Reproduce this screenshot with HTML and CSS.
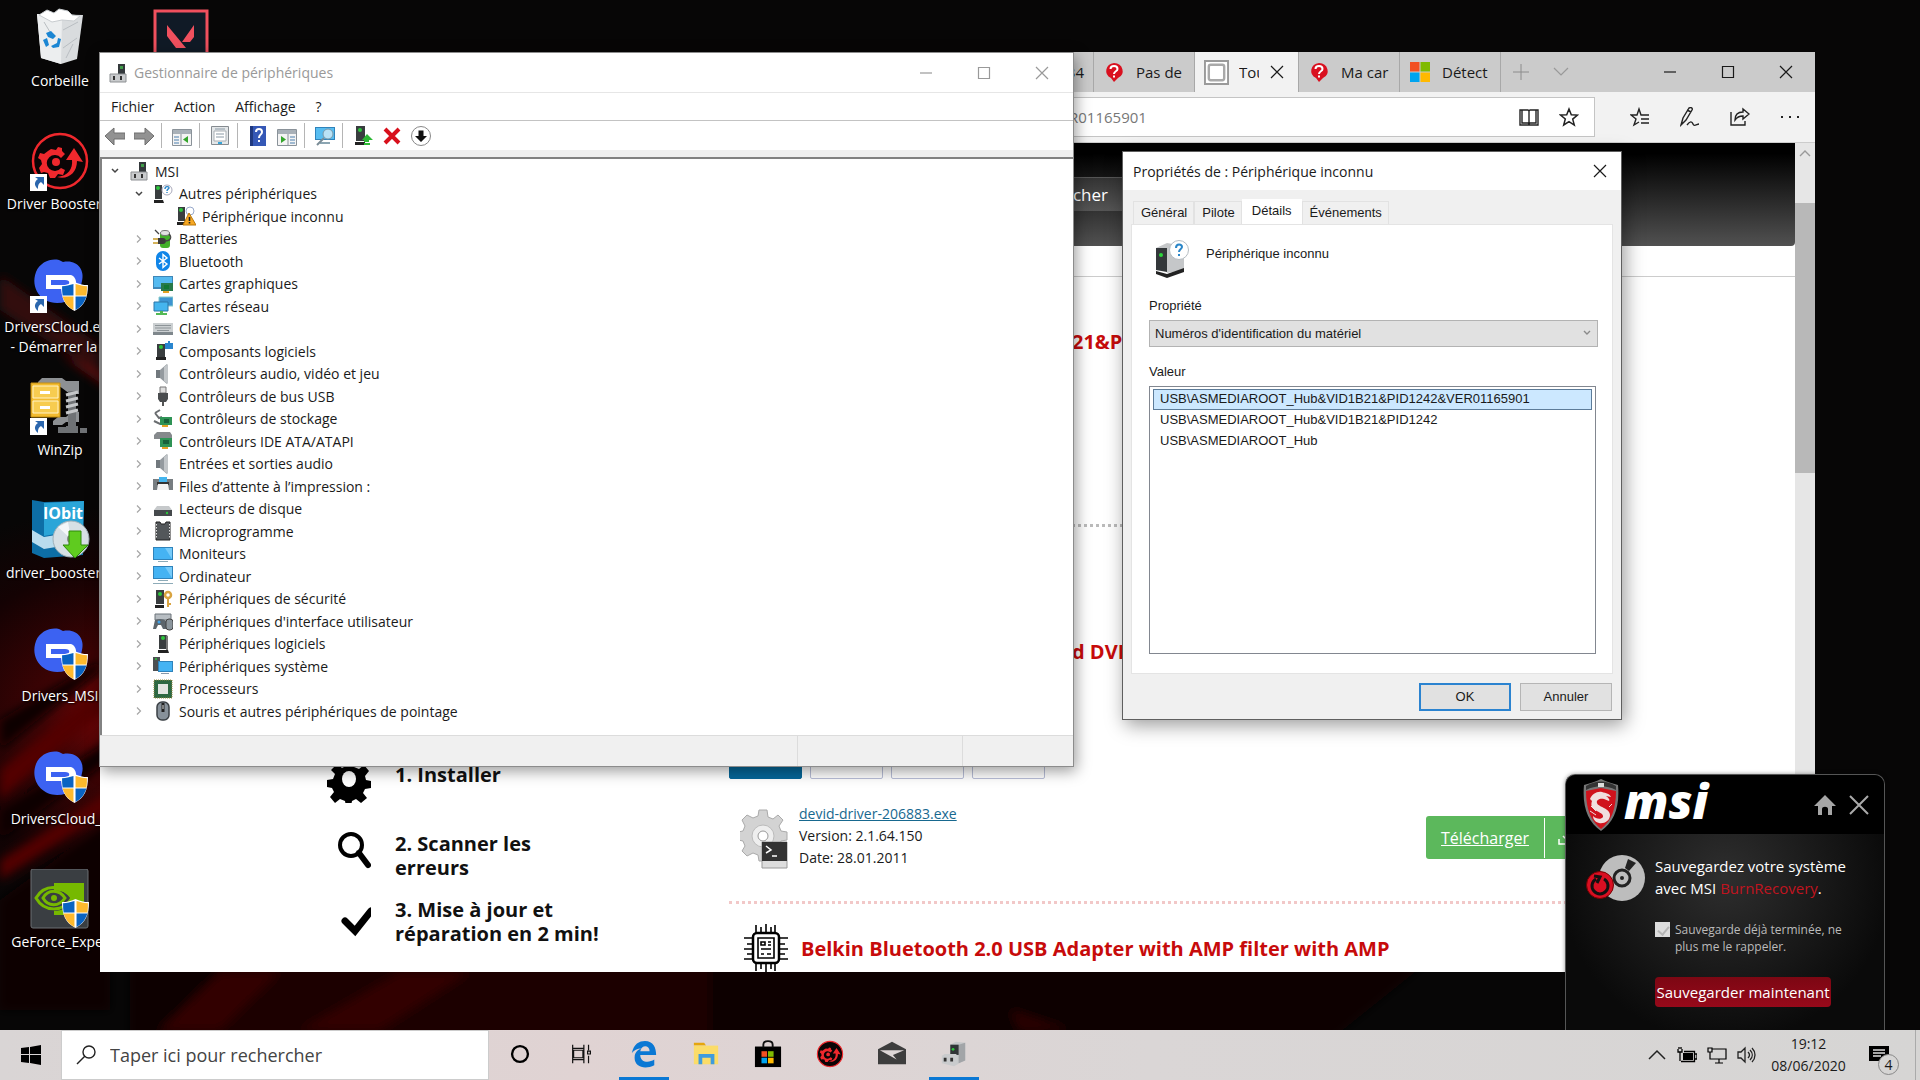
FILE: index.html
```html
<!DOCTYPE html>
<html lang="fr">

<head>
	<meta charset="UTF-8">
	<meta name="viewport" content="width=device-width, initial-scale=1.0">
	<title>Bureau</title>
	<link rel="stylesheet" href="styles.css">
</head>

<body>

	<!-- Icon sprite -->
	<svg class="sprite" aria-hidden="true">
	<symbol id="i-pc" viewBox="0 0 20 20"><path d="M10 1h7v11h-7z" fill="#33383b"/><path d="M12 3h3v3h-3z" fill="#3f9c48"/><path d="M2 11h16v8H2z" fill="#c9cbcd" stroke="#8d9093"/><path d="M5 13h2v4H5zM12 13h2v4h-2z" fill="#333"/></symbol>
	<symbol id="i-tower" viewBox="0 0 20 20"><path d="M6 1h8l1 14H6z" fill="#393d3f"/><path d="M13 1l2 1v14h-2z" fill="#777"/><path d="M5 16h10l1 3H5z" fill="#222"/><circle cx="10" cy="4" r="2" fill="#2cc53b"/></symbol>
	<symbol id="i-unknown" viewBox="0 0 20 20"><path d="M2 1h7v14H2z" fill="#393d3f"/><path d="M1 16h9l1 3H1z" fill="#222"/><circle cx="5" cy="4" r="2" fill="#2cc53b"/><circle cx="14" cy="6" r="5" fill="#fff" stroke="#aab"/><path d="M12 5c0-3 4-3 4-1 0 1-2 1-2 3M14 8v1" fill="none" stroke="#2b86c8" stroke-width="1.4"/></symbol>
	<symbol id="i-warn" viewBox="0 0 20 20"><path d="M2 1h7v14H2z" fill="#393d3f"/><path d="M1 16h8v3H1z" fill="#222"/><circle cx="5" cy="4" r="2" fill="#2cc53b"/><circle cx="14" cy="5" r="4" fill="#fff" stroke="#9ac"/><path d="M13 7l7 12H7z" fill="#f7a823" stroke="#b97708"/><path d="M13.500 11v4M13.500 16v1.500" stroke="#222" stroke-width="1.600"/></symbol>
	<symbol id="i-battery" viewBox="0 0 20 20"><rect x="7" y="3" width="10" height="16" rx="3" fill="#43b02a"/><ellipse cx="12" cy="4" rx="4.500" ry="2.500" fill="#e2e2e2" stroke="#777"/><path d="M5 9h5c4 0 4 6 0 6H5z" fill="#3b3b3b"/><path d="M0 10h5M0 14h5" stroke="#c79b26" stroke-width="1.500"/><path d="M12 12c6 0 7-4 4-7M2 1l4 4" stroke="#444" stroke-width="1.300" fill="none"/></symbol>
	<symbol id="i-bt" viewBox="0 0 20 20"><rect x="3" y="0" width="14" height="20" rx="7" fill="#1085e8"/><path d="M6 7l8 6-4 3.500V3.500L14 7l-8 6" fill="none" stroke="#fff" stroke-width="1.400"/></symbol>
	<symbol id="i-gpu" viewBox="0 0 20 20"><path d="M0 2h20v13H0z" fill="#3f87b8"/><path d="M1 3h18v10H1z" fill="#55baf0"/><path d="M8 9h12v8H8z" fill="#28794a"/><path d="M11 11h5v4h-5z" fill="#173"/><path d="M10 17h6v2h-6z" fill="#e3a224"/></symbol>
	<symbol id="i-net" viewBox="0 0 20 20"><path d="M6 1h14v9H6z" fill="#3d94d1" stroke="#8cc"/><path d="M1 6h14v9H1z" fill="#45b5ee" stroke="#2c76a8"/><path d="M7 15h3v2h4v2H3v-2h4z" fill="#53b955"/></symbol>
	<symbol id="i-kbd" viewBox="0 0 20 20"><path d="M0 4h20v12H0z" fill="#7f878c"/><path d="M0 4h20v9H0z" fill="#ccd0d2"/><path d="M2 6.500h16M2 9h16M4 11.500h12" stroke="#8d9498"/></symbol>
	<symbol id="i-soft" viewBox="0 0 20 20"><path d="M4 3h8v13H4z" fill="#393d3f"/><path d="M3 16h10v3H3z" fill="#222"/><circle cx="8" cy="6" r="2" fill="#2cc53b"/><path d="M12 2h3V0h2v2h3v6h-8z" fill="#2a86cf"/></symbol>
	<symbol id="i-audio" viewBox="0 0 20 20"><path d="M3 6h5v8H3z" fill="#71787d"/><path d="M7 6l7-6v20l-7-6z" fill="#949a9f"/><path d="M11 3l4-3v20l-4-3z" fill="#c2c6c9"/></symbol>
	<symbol id="i-usb" viewBox="0 0 20 20"><path d="M7 1h6v6H7z" fill="#ddd" stroke="#777"/><path d="M5 7h10v6l-2 3H7l-2-3z" fill="#494c4e"/><path d="M9 16h2v4H9z" fill="#555"/></symbol>
	<symbol id="i-store" viewBox="0 0 20 20"><path d="M2 4l5-3M2 4l4 5 3-1M1 12l6 3 5-2" stroke="#6a6d70" stroke-width="2" fill="none"/><path d="M7 8h12v8H7z" fill="#2e9355"/><path d="M11 10h5v4h-5z" fill="#17623a"/><path d="M9 16h6v2H9z" fill="#e3a224"/></symbol>
	<symbol id="i-ide" viewBox="0 0 20 20"><path d="M1 4l3-3h13l2 3v4H1z" fill="#85898c"/><path d="M7 7h12v9H7z" fill="#2e9355"/><path d="M10 9h6v4h-6z" fill="#17623a"/><path d="M9 16h6v2H9z" fill="#e3a224"/></symbol>
	<symbol id="i-print" viewBox="0 0 20 20"><path d="M0 3h20v11H0z" fill="#777d81"/><path d="M6 1h8v5H6z" fill="#45b5ee"/><path d="M4 6h12v3H4z" fill="#333"/><path d="M5 8h10l1 6H4z" fill="#f3f3f3"/></symbol>
	<symbol id="i-disk" viewBox="0 0 20 20"><path d="M4 7h12l3 4H1z" fill="#c6c9cb"/><path d="M1 11h18v6H1z" fill="#45494c"/><circle cx="14" cy="14" r="1.200" fill="#2cc53b"/></symbol>
	<symbol id="i-chip" viewBox="0 0 20 20"><path d="M3 1h4l1 2h4l1-2h4v18H3z" fill="#53575a" stroke="#222"/><path d="M3.500 3v15M16.500 3v15" stroke="#ddd" stroke-dasharray="1.500 1.500"/></symbol>
	<symbol id="i-mon" viewBox="0 0 20 20"><path d="M0 3h20v13H0z" fill="#2f83bb"/><path d="M1 4h18v11H1z" fill="#45b3f3"/><path d="M12 4h7v11z" fill="#76cbfa"/><path d="M5 17h10v1H5z" fill="#8dabb8"/></symbol>
	<symbol id="i-comp" viewBox="0 0 20 20"><path d="M0 0h20v13H0z" fill="#2f83bb"/><path d="M1 1h18v11H1z" fill="#45b3f3"/><path d="M12 1h7v11z" fill="#76cbfa"/><path d="M5 14h10v1H5zM0 17h20v1H0z" fill="#8dabb8"/></symbol>
	<symbol id="i-key" viewBox="0 0 20 20"><path d="M3 1h8v14H3z" fill="#393d3f"/><path d="M2 16h9v3H2z" fill="#222"/><circle cx="7" cy="5" r="2" fill="#2cc53b"/><circle cx="15" cy="6" r="3" fill="none" stroke="#d9a441" stroke-width="2.500"/><path d="M15 9v9M15 15h3" stroke="#d9a441" stroke-width="2"/></symbol>
	<symbol id="i-hid" viewBox="0 0 20 20"><path d="M2 3h16v6H2z" fill="#b7bdc2" stroke="#6d757b"/><path d="M2 9c5-2 9-1 11 1v8h-3l-2-4H5l-2 4H0z" fill="#5c656c"/><circle cx="6" cy="11" r="1.500" fill="#41a2e8"/><rect x="13" y="8" width="7" height="11" rx="3" fill="#8b959c" stroke="#444"/></symbol>
	<symbol id="i-sys" viewBox="0 0 20 20"><path d="M0 1h7v14H0z" fill="#4b4f52"/><path d="M5 5h15v11H5z" fill="#2f83bb"/><path d="M6 6h13v9H6z" fill="#45b3f3"/><path d="M8 17h8v1H8z" fill="#89a"/><circle cx="3" cy="3" r="1" fill="#2cc53b"/></symbol>
	<symbol id="i-cpu" viewBox="0 0 20 20"><path d="M1 1h18v18H1z" fill="#2d6843" stroke="#9a8a40" stroke-dasharray="1 1"/><path d="M5 5h10v10H5z" fill="#e2e5e2"/></symbol>
	<symbol id="i-mouse" viewBox="0 0 20 20"><rect x="4" y="1" width="12" height="18" rx="5" fill="#87919a" stroke="#3b4045" stroke-width="1.500"/><path d="M10 2v9" stroke="#222" stroke-width="3"/><path d="M10 4v4" stroke="#ddd"/></symbol>
	<symbol id="i-open" viewBox="0 0 12 12"><path d="M3 4l3 3 3-3" fill="none" stroke="#444" stroke-width="1.500"/></symbol>
	<symbol id="i-closed" viewBox="0 0 12 12"><path d="M4 2.500L7.500 6 4 9.500" fill="none" stroke="#a6a6a6" stroke-width="1.200"/></symbol>
	<symbol id="i-x" viewBox="0 0 16 16"><path d="M2 2l12 12M14 2L2 14" fill="none" stroke="currentColor" stroke-width="1.200"/></symbol>
	<symbol id="i-max" viewBox="0 0 16 16"><path d="M2.500 2.500h11v11h-11z" fill="none" stroke="currentColor" stroke-width="1.200"/></symbol>
	<symbol id="i-min" viewBox="0 0 16 16"><path d="M2 8h12" stroke="currentColor" stroke-width="1.200"/></symbol>
	<symbol id="i-shield" viewBox="0 0 26 28"><path d="M13 0c4 2 8 3 13 3 0 12-3 20-13 25C3 23 0 15 0 3c5 0 9-1 13-3z" fill="#fff"/><path d="M12 2v11H1.500C1 10 1 7 1 4c4 0 7-1 11-2zM14 14h10.500c-2 6-5 10-10.500 13z" fill="#0a63c2"/><path d="M14 2v11h10.500c.5-3 .5-6 .5-9-4 0-7-1-11-2zM12 14H1.500C3.500 20 6.500 24 12 27z" fill="#fdb92e"/></symbol>
	<symbol id="i-link" viewBox="0 0 17 17"><path d="M0 0h17v17H0z" fill="#fff"/><path d="M5 3h9v8l-3-3c-3 2-3 4-3 7-5-4-3-8 0-10z" fill="#2b66ad"/></symbol>
	<symbol id="i-dc" viewBox="0 0 60 60"><path d="M6 18C10 8 21 4 29 6l4 2c14-3 22 8 19 19-2 14-12 22-25 22C11 49 0 34 6 18z" fill="#3c62f2"/><path d="M16 21h24c6 0 9 11 2 14H16z" fill="#fff"/><path d="M21 26h14c6 0 5 5 1 5H21z" fill="#3c62f2"/><use href="#i-shield" x="31" y="28" width="27" height="29"/></symbol>
	<symbol id="i-boost" viewBox="0 0 60 60"><circle cx="30" cy="30" r="27" fill="#0b0506" stroke="#f0282d" stroke-width="2.500"/><path d="M21 18l5 1 2-3 4 1v3l3 3-4 4a8 8 0 1 0 0 10l4 2-2 5-5-1-3 4h-5l-2-5-4-1-3 1-2-5 3-4-1-4-3-2 2-5 4 1 4-3z" fill="#f0282d"/><circle cx="26" cy="31" r="4" fill="#f0282d"/><path d="M27 46c11-1 16-8 15-17h-6l8-12 9 14-6-1c0 12-9 19-20 16z" fill="#f0282d"/></symbol>
	<symbol id="i-ask" viewBox="0 0 20 20"><path d="M10 1a9 8 0 0 1 4 15l-4 4-3-4A9 8 0 0 1 10 1z" fill="#d9101f"/><path d="M6.500 7c0-4 7-4 7 0 0 2.500-3.500 2-3.500 5M10 13.500v2" fill="none" stroke="#fff" stroke-width="2"/></symbol>
	</svg>

	<div class="desktop">
	<svg class="wallpaper" viewBox="0 0 1920 1080" preserveAspectRatio="none" aria-hidden="true">
		<defs>
		<radialGradient id="glow"><stop offset="0" stop-color="#7a0506"/><stop offset="0.300" stop-color="#3d0304"/><stop offset="0.700" stop-color="#140203"/><stop offset="1" stop-color="#070606"/></radialGradient>
		<filter id="soft"><feGaussianBlur stdDeviation="5"/></filter>
		</defs>
		<path d="M0 0h1920v1080H0z" fill="#070606"/>
		<ellipse cx="120" cy="715" rx="260" ry="210" fill="url(#glow)"/>
		<g filter="url(#soft)">
			<path d="M0 275l100 70v30L0 310z" fill="#33090b"/>
			<path d="M60 355l50 20v15z" fill="#5a0a0e"/>
			<path d="M0 770l110-90v25L0 800zM0 860l110-70v20L0 880z" fill="#520406"/>
			<path d="M0 720l100-60v10L0 750zM0 810l110-70v20L0 840zM0 900l110-80v190H0z" fill="#0b0203"/>
			<path d="M130 960h1300l-100 80H130z" fill="#0d0102"/>
			<path d="M150 1040l90-75h470v75z" fill="#1a0203"/>
			<path d="M160 1030l60-58h60l-60 58zM300 1030l100-58h70l-90 58z" fill="#300305"/>
			<path d="M1020 1030l-10-20 60 20z" fill="#2a0406"/>
		</g>
	</svg>

	<!-- Desktop shortcuts -->
	<div class="shortcuts">
		<div class="shortcut">
		<svg class="shortcut-icon" viewBox="0 0 60 60"><path d="M7 6l46 1-6 44-16 5-20-6z" fill="#d9dcde"/><path d="M7 6l25 4-1 46-20-6z" fill="#eceeef"/><path d="M9 7l8-5 7 3 5-4 9 2 4 4 8 1-6 5-12-1-10 2z" fill="#fff" stroke="#c8cccf"/><path d="M33 22l15-8M33 40l14-10M14 14l6 10M36 50l7-14" stroke="#b9bec2"/><path d="M16 25l5-2 5 5-3 3-5-2zM13 32l4-2 2 7-3 2zM21 38l6-3 1-5 3 1-2 8-6 1z" fill="#1b86d3"/></svg>
		<span class="shortcut-label">Corbeille</span>
		</div>
		<div class="shortcut">
		<svg class="shortcut-icon" viewBox="0 0 60 60"><use href="#i-boost" width="60" height="60"/><use href="#i-link" x="0" y="43" width="17" height="17"/></svg>
		<span class="shortcut-label">Driver Booster 7</span>
		</div>
		<div class="shortcut">
		<svg class="shortcut-icon" viewBox="0 0 60 60"><use href="#i-dc" width="60" height="60"/><use href="#i-link" x="0" y="42" width="17" height="17"/></svg>
		<span class="shortcut-label">DriversCloud.exe<br>- Démarrer la d</span>
		</div>
		<div class="shortcut">
		<svg class="shortcut-icon" viewBox="0 0 60 60"><path d="M8 5l4-4h20l4 3h13v13h-9l-8-6-6-4H8zM28 40h8l6-5h7v10H36l-4 3h-9v-4z" fill="#8d9093"/><path d="M38 14h8v36h-8zM28 50h8v6h-8zM36 49h12v7H36zM50 51h7v5h-7z" fill="#6f7275"/><path d="M36 18l12-3M36 24l12-3M36 30l12-3M36 36l12-3" stroke="#c4c6c8" stroke-width="3"/><path d="M1 6h29v34H1z" fill="#f2bb2f" stroke="#c48f13"/><path d="M3 9h25v12H3zM3 24h25v12H3z" fill="#f7cc50" stroke="#fff3c8"/><path d="M10 14h10v3H10zM10 29h10v3H10z" fill="#fff"/><use href="#i-link" x="0" y="41" width="17" height="17"/></svg>
		<span class="shortcut-label">WinZip</span>
		</div>
		<div class="shortcut">
		<svg class="shortcut-icon" viewBox="0 0 60 60"><path d="M2 0l12 2 40-1-1 54-39 3-12-5z" fill="#0d6ea6"/><path d="M14 3l40-2-1 28-39 7z" fill="#2aa5d8"/><path d="M2 30l12 7 24-4v12L14 49 2 42z" fill="#b9dcee"/><text x="13" y="19" class="box-text">IObit</text><circle cx="41" cy="39" r="18" fill="#d7e0e5" stroke="#9fb0b8"/><path d="M41 39L28 27l10-5zM41 39l14 9-9 7z" fill="#f4f7f9"/><circle cx="41" cy="39" r="4" fill="#888"/><path d="M39 31h12v14h7L45 58 33 45h6z" fill="#5fcb1f" stroke="#2e8a0b"/></svg>
		<span class="shortcut-label">driver_booster_s</span>
		</div>
		<div class="shortcut">
		<svg class="shortcut-icon" viewBox="0 0 60 60"><use href="#i-dc" width="60" height="60"/></svg>
		<span class="shortcut-label">Drivers_MSI</span>
		</div>
		<div class="shortcut">
		<svg class="shortcut-icon" viewBox="0 0 60 60"><use href="#i-dc" width="60" height="60"/></svg>
		<span class="shortcut-label">DriversCloud_1</span>
		</div>
		<div class="shortcut">
		<svg class="shortcut-icon" viewBox="0 0 60 60"><rect x="1" y="0" width="57" height="59" rx="2" fill="#3a3e42" stroke="#6a6e72"/><path d="M24 14h30v32H24v-4c10 0 16-6 19-10-4-7-10-11-19-10z" fill="#76b900"/><path d="M6 29c8-14 26-14 36 0-9 15-28 14-36 0z" fill="none" stroke="#76b900" stroke-width="3"/><path d="M13 29c5-9 16-9 22 0-6 9-17 9-22 0z" fill="none" stroke="#76b900" stroke-width="3"/><circle cx="24" cy="29" r="3" fill="#76b900"/><use href="#i-shield" x="32" y="30" width="27" height="29"/></svg>
		<span class="shortcut-label">GeForce_Exper</span>
		</div>
		<div class="shortcut" aria-label="Valorant">
		<svg class="shortcut-icon" viewBox="0 0 60 60"><path d="M5 3h52v52H5z" fill="#101a26" stroke="#f0505e" stroke-width="3"/><path d="M17 17l19 23H26l-9-12zM44 17v12l-4 5h-8z" fill="#f0505e"/></svg>
		</div>
	</div>

	<!-- Browser window -->
	<section class="window browser">
		<div class="tabstrip">
		<button class="tab tab-first">134</button>
		<button class="tab"><svg class="tab-icon"><use href="#i-ask"/></svg><span>Pas de</span></button>
		<button class="tab active"><svg class="tab-fav" viewBox="0 0 26 26"><path d="M1 1h24v24H1z" fill="#fff" stroke="#9a9a9a" stroke-width="2"/><rect x="5" y="5" width="16" height="16" rx="2" fill="#fff" stroke="#a9a9a9" stroke-width="2.500"/></svg><span class="tab-cut">Tous</span><svg class="tab-close"><use href="#i-x"/></svg></button>
		<button class="tab"><svg class="tab-icon"><use href="#i-ask"/></svg><span>Ma car</span></button>
		<button class="tab"><svg class="tab-icon" viewBox="0 0 20 20"><path d="M0 0h9.500v9.500H0z" fill="#f25022"/><path d="M10.500 0H20v9.500h-9.500z" fill="#7fba00"/><path d="M0 10.500h9.500V20H0z" fill="#00a4ef"/><path d="M10.500 10.500H20V20h-9.500z" fill="#ffb900"/></svg><span>Détect</span></button>
		<button class="strip-btn" aria-label="Nouvel onglet"><svg viewBox="0 0 18 18"><path d="M9 1v16M1 9h16" stroke="#8c8c8c" fill="none"/></svg></button>
		<button class="strip-btn" aria-label="Aperçu des onglets"><svg viewBox="0 0 18 18"><path d="M2 5l7 7 7-7" stroke="#999" fill="none" stroke-width="1.200"/></svg></button>
		<div class="controls">
			<button aria-label="Réduire"><svg><use href="#i-min"/></svg></button>
			<button aria-label="Agrandir"><svg><use href="#i-max"/></svg></button>
			<button aria-label="Fermer"><svg><use href="#i-x"/></svg></button>
		</div>
		</div>
		<div class="navbar">
		<div class="address">
			<input class="url" type="text" value="R01165901" aria-label="Adresse">
			<svg class="nav-icon" viewBox="0 0 20 20"><path d="M1 3h8l1 1 1-1h8v15H1zM10 4v13M3 3v13h6l1 1 1-1h6V3M1 18h18" fill="none" stroke="#222" stroke-width="1.400"/></svg>
			<svg class="nav-icon" viewBox="0 0 20 20"><path d="M10 2l2.300 5.800 6.200.300-4.800 4 1.600 6L10 14.700 4.700 18l1.600-6-4.800-4 6.200-.3z" fill="none" stroke="#222" stroke-width="1.500"/></svg>
		</div>
		<div class="nav-tools">
			<button aria-label="Favoris"><svg viewBox="0 0 20 20"><path d="M19 8h-8L9 2 7 8H1l5 4-2 6 5-3M11 12h8M11 16h8" fill="none" stroke="#222" stroke-width="1.400"/></svg></button>
			<button aria-label="Notes"><svg viewBox="0 0 20 20"><path d="M1 18l2-7L9 1c2-1 4 0 3 2L6 13zM7 3l4 2M7 18c3-4 5-4 6-1s4 0 6 0" fill="none" stroke="#222" stroke-width="1.400"/></svg></button>
			<button aria-label="Partager"><svg viewBox="0 0 20 20"><path d="M1 5v13h14v-4M5 13c0-5 3-8 8-8V2l6 5-6 5V9c-4 0-6 1-8 4z" fill="none" stroke="#222" stroke-width="1.400"/></svg></button>
			<button aria-label="Paramètres"><svg viewBox="0 0 20 20"><path d="M1 9h2v2H1zM9 9h2v2H9zM17 9h2v2h-2z" fill="#222"/></svg></button>
		</div>
		</div>
		<div class="viewport">
		<div class="page">
			<div class="page-header"><button class="search-btn">Rechercher</button></div>
			<div class="page-body">
			<ol class="steps">
				<li><svg viewBox="0 0 44 44"><path d="M18 2h8l1 6 5 2 5-4 5 6-4 5 1 4 5 1v7l-6 1-2 4 4 5-6 5-5-4-4 2-1 5h-5l-1-5-5-2-5 4-5-6 4-5-2-4-5-1v-7l6-1 2-5-4-4 6-6 5 4 4-2z" fill="#000"/><ellipse cx="22" cy="20" rx="7" ry="8" fill="#fff"/></svg><span>1. Installer</span></li>
				<li><svg viewBox="0 0 44 44"><circle cx="24" cy="17" r="11" fill="none" stroke="#000" stroke-width="4"/><path d="M32 25l9 12" stroke="#000" stroke-width="6" stroke-linecap="round"/></svg><span>2. Scanner les erreurs</span></li>
				<li><svg viewBox="0 0 44 44"><path d="M18 27l10 10 16-20" fill="none" stroke="#000" stroke-width="7" stroke-linecap="round"/></svg><span>3. Mise à jour et réparation en 2 min!</span></li>
			</ol>
			<div class="results">
				<article class="driver first">
				<h2>21&amp;PID1242</h2>
				</article>
				<article class="driver second">
				<h2>d DVB-T</h2>
				<div class="os-list">
					<button class="os selected" aria-label="64 bits"></button>
					<button class="os" aria-label="32 bits"></button>
					<button class="os" aria-label="Autre"></button>
					<button class="os" aria-label="Tous"></button>
				</div>
				<div class="file">
					<svg class="file-icon" viewBox="0 0 48 60"><path d="M19 1h8l1 7 5 2 5-4 5 5-4 6 2 5 6 1v8l-6 1-2 5 4 6-5 5-6-4-5 2-1 6h-7l-1-6-5-2-6 3-5-5 3-5-2-5-5-1v-8l5-1 2-5-3-6 5-5 6 3 5-2z" fill="#d3d3d3" stroke="#aaa"/><circle cx="23" cy="27" r="11" fill="#eee" stroke="#bbb"/><circle cx="23" cy="27" r="5" fill="#fff" stroke="#999"/><path d="M22 33h25v26H22z" fill="#ddd" stroke="#999"/><path d="M22 33h25v19H22z" fill="#333"/><path d="M26 37l5 4-5 3M32 47h5" fill="none" stroke="#fff" stroke-width="1.500"/></svg>
					<div class="file-info">
					<a href="#">devid-driver-206883.exe</a>
					<span>Version: 2.1.64.150</span>
					<span>Date: 28.01.2011</span>
					</div>
					<a class="download" href="#"><span class="download-text">Télécharger</span><svg viewBox="0 0 20 20"><path d="M2 11v5h16v-5M10 2v9M6 8l4 4 4-4" fill="none" stroke="#fff" stroke-width="1.500"/></svg></a>
				</div>
				</article>
				<article class="driver third">
				<svg class="chip" viewBox="0 0 44 50"><rect x="9" y="9" width="26" height="30" rx="4" fill="none" stroke="#000" stroke-width="2.500"/><path d="M14 14h16v20H14zM12 1v8M17 3v6M22 0v9M27 3v6M31 1v8M12 40v7M17 40v5M22 40v9M27 40v5M31 40v7M0 14h9M3 20h6M0 25h9M3 30h6M0 35h9M35 14h9M35 20h6M35 25h9M35 30h6M35 35h9M17 18h4v3h-4zM24 18h3M24 21h3M17 25h10M17 30h3M23 30h4" fill="none" stroke="#000" stroke-width="1.600"/></svg>
				<h2>Belkin Bluetooth 2.0 USB Adapter with AMP filter with AMP</h2>
				</article>
			</div>
			</div>
		</div>
		<div class="scrollbar"><svg viewBox="0 0 12 12"><path d="M1 9l5-5 5 5" fill="none" stroke="#999" stroke-width="1.400"/></svg><div class="thumb"></div></div>
		</div>
	</section>

	<!-- Device manager -->
	<section class="window manager">
		<header class="titlebar">
		<svg class="icon"><use href="#i-pc"/></svg>
		<h1>Gestionnaire de périphériques</h1>
		<div class="controls">
			<button aria-label="Réduire"><svg><use href="#i-min"/></svg></button>
			<button aria-label="Agrandir"><svg><use href="#i-max"/></svg></button>
			<button aria-label="Fermer"><svg><use href="#i-x"/></svg></button>
		</div>
		</header>
		<nav class="menu">
		<button>Fichier</button>
		<button>Action</button>
		<button>Affichage</button>
		<button>?</button>
		</nav>
		<div class="toolbar">
		<button aria-label="Précédent"><svg viewBox="0 0 20 20"><path d="M0 10l9-8v5h11v6H9v6z" fill="#929292" stroke="#6f6f6f"/></svg></button>
		<button aria-label="Suivant"><svg viewBox="0 0 20 20"><path d="M20 10l-9-8v5H0v6h11v6z" fill="#929292" stroke="#6f6f6f"/></svg></button>
		<i class="sep"></i>
		<button aria-label="Arborescence"><svg viewBox="0 0 20 20"><path d="M.5 3.500h19v16H.5z" fill="#f4f4f4" stroke="#8a9299"/><path d="M1 4h18v4H1z" fill="#a9b1b8"/><path d="M2 11h5M2 14h5M2 17h5" stroke="#4b7fae"/><path d="M9 8v11" stroke="#8a9299"/><path d="M16 10v7l-5-3.500z" fill="#35a52c"/></svg></button>
		<i class="sep"></i>
		<button aria-label="Propriétés"><svg viewBox="0 0 20 20"><path d="M1.500.5h17v18h-17z" fill="#e4e7e9" stroke="#858b90"/><path d="M4 5h12v10H4z" fill="#fff" stroke="#a9afb4"/><path d="M6 8h8M6 11h8M5 3h10" stroke="#8a99a5"/><path d="M8 17h4" stroke="#37a4d8" stroke-width="2"/></svg></button>
		<i class="sep"></i>
		<button aria-label="Aide"><svg viewBox="0 0 20 20"><path d="M2 0h16v20H2z" fill="#3558b6"/><path d="M2 0h3v20H2z" fill="#20397f"/><path d="M8 6c0-4 6-4 6 0 0 3-3 2-3 6M11 14v2" fill="none" stroke="#fff" stroke-width="2"/></svg></button>
		<button aria-label="Actions"><svg viewBox="0 0 20 20"><path d="M.5 3.500h19v16H.5z" fill="#f4f4f4" stroke="#8a9299"/><path d="M1 4h18v4H1z" fill="#a9b1b8"/><path d="M13 11h5M13 14h5M13 17h5" stroke="#4b7fae"/><path d="M11 8v11" stroke="#8a9299"/><path d="M4 10v7l5-3.500z" fill="#35a52c"/></svg></button>
		<i class="sep"></i>
		<button aria-label="Rechercher les modifications"><svg viewBox="0 0 20 20"><path d="M0 1h20v13H0z" fill="#2f83bb"/><path d="M1 2h18v11H1z" fill="#57bdf1"/><path d="M5 16h10v2H5z" fill="#8ba5b2"/><circle cx="13" cy="8" r="5" fill="#b9e2f6" stroke="#7a98a8"/><path d="M9 12l-7 7" stroke="#7a8c96" stroke-width="2"/></svg></button>
		<i class="sep"></i>
		<button aria-label="Mettre à jour"><svg viewBox="0 0 20 20"><path d="M3 0h9v15H3z" fill="#393d3f"/><path d="M2 16h10v3H2z" fill="#222"/><circle cx="7" cy="4" r="2" fill="#2cc53b"/><path d="M14 8l6 6h-4v2h-5v-2H9zM11 17h6v2h-6z" fill="#2cb834"/></svg></button>
		<button aria-label="Désinstaller"><svg viewBox="0 0 20 20"><path d="M3 3l14 14M17 3L3 17" stroke="#d8101c" stroke-width="4"/></svg></button>
		<button aria-label="Désactiver"><svg viewBox="0 0 20 20"><circle cx="10" cy="10" r="9.500" fill="#fff" stroke="#888"/><path d="M7.500 4.500h5V10H16l-6 6-6-6h3.500z" fill="#111"/></svg></button>
		</div>
		<ul class="tree">
		<li class="root"><svg class="chev"><use href="#i-open"/></svg><svg class="icon"><use href="#i-pc"/></svg>MSI</li>
		<li><svg class="chev"><use href="#i-open"/></svg><svg class="icon"><use href="#i-unknown"/></svg>Autres périphériques</li>
		<li class="leaf"><svg class="icon"><use href="#i-warn"/></svg>Périphérique inconnu</li>
		<li><svg class="chev"><use href="#i-closed"/></svg><svg class="icon"><use href="#i-battery"/></svg>Batteries</li>
		<li><svg class="chev"><use href="#i-closed"/></svg><svg class="icon"><use href="#i-bt"/></svg>Bluetooth</li>
		<li><svg class="chev"><use href="#i-closed"/></svg><svg class="icon"><use href="#i-gpu"/></svg>Cartes graphiques</li>
		<li><svg class="chev"><use href="#i-closed"/></svg><svg class="icon"><use href="#i-net"/></svg>Cartes réseau</li>
		<li><svg class="chev"><use href="#i-closed"/></svg><svg class="icon"><use href="#i-kbd"/></svg>Claviers</li>
		<li><svg class="chev"><use href="#i-closed"/></svg><svg class="icon"><use href="#i-soft"/></svg>Composants logiciels</li>
		<li><svg class="chev"><use href="#i-closed"/></svg><svg class="icon"><use href="#i-audio"/></svg>Contrôleurs audio, vidéo et jeu</li>
		<li><svg class="chev"><use href="#i-closed"/></svg><svg class="icon"><use href="#i-usb"/></svg>Contrôleurs de bus USB</li>
		<li><svg class="chev"><use href="#i-closed"/></svg><svg class="icon"><use href="#i-store"/></svg>Contrôleurs de stockage</li>
		<li><svg class="chev"><use href="#i-closed"/></svg><svg class="icon"><use href="#i-ide"/></svg>Contrôleurs IDE ATA/ATAPI</li>
		<li><svg class="chev"><use href="#i-closed"/></svg><svg class="icon"><use href="#i-audio"/></svg>Entrées et sorties audio</li>
		<li><svg class="chev"><use href="#i-closed"/></svg><svg class="icon"><use href="#i-print"/></svg>Files d’attente à l’impression :</li>
		<li><svg class="chev"><use href="#i-closed"/></svg><svg class="icon"><use href="#i-disk"/></svg>Lecteurs de disque</li>
		<li><svg class="chev"><use href="#i-closed"/></svg><svg class="icon"><use href="#i-chip"/></svg>Microprogramme</li>
		<li><svg class="chev"><use href="#i-closed"/></svg><svg class="icon"><use href="#i-mon"/></svg>Moniteurs</li>
		<li><svg class="chev"><use href="#i-closed"/></svg><svg class="icon"><use href="#i-comp"/></svg>Ordinateur</li>
		<li><svg class="chev"><use href="#i-closed"/></svg><svg class="icon"><use href="#i-key"/></svg>Périphériques de sécurité</li>
		<li><svg class="chev"><use href="#i-closed"/></svg><svg class="icon"><use href="#i-hid"/></svg>Périphériques d'interface utilisateur</li>
		<li><svg class="chev"><use href="#i-closed"/></svg><svg class="icon"><use href="#i-tower"/></svg>Périphériques logiciels</li>
		<li><svg class="chev"><use href="#i-closed"/></svg><svg class="icon"><use href="#i-sys"/></svg>Périphériques système</li>
		<li><svg class="chev"><use href="#i-closed"/></svg><svg class="icon"><use href="#i-cpu"/></svg>Processeurs</li>
		<li><svg class="chev"><use href="#i-closed"/></svg><svg class="icon"><use href="#i-mouse"/></svg>Souris et autres périphériques de pointage</li>
		</ul>
		<footer class="status"><span></span><span></span><span></span></footer>
	</section>

	<!-- Properties dialog -->
	<section class="window dialog">
		<header class="dialog-title">
		<h1>Propriétés de : Périphérique inconnu</h1>
		<button aria-label="Fermer"><svg><use href="#i-x"/></svg></button>
		</header>
		<div class="dialog-tabs">
		<button>Général</button>
		<button>Pilote</button>
		<button class="active">Détails</button>
		<button>Événements</button>
		</div>
		<div class="panel">
		<div class="device">
			<svg viewBox="0 0 34 38"><path d="M1 8l11-5 17 3v24l-17 3z" fill="#c5c7c9"/><path d="M1 8h11v24L1 30z" fill="#33373a"/><path d="M1 31l11 3 17-6v4l-17 6-11-4z" fill="#222"/><circle cx="6" cy="15" r="2" fill="#2cd53b"/><circle cx="24" cy="10" r="9.500" fill="#fff" stroke="#b5bcc2"/><path d="M21 8c0-5 6-4 6-1 0 2-3 2-3 5M24 14v2" fill="none" stroke="#2b86c8" stroke-width="2"/></svg>
			<span>Périphérique inconnu</span>
		</div>
		<label for="property">Propriété</label>
		<div class="select-wrap">
			<select id="property"><option>Numéros d'identification du matériel</option></select>
			<svg viewBox="0 0 12 12"><path d="M3 4l3 3 3-3" fill="none" stroke="#8a8a8a" stroke-width="1.400"/></svg>
		</div>
		<span id="value-label">Valeur</span>
		<ul class="values" role="listbox" aria-labelledby="value-label">
			<li class="selected" role="option" aria-selected="true">USB\ASMEDIAROOT_Hub&amp;VID1B21&amp;PID1242&amp;VER01165901</li>
			<li role="option">USB\ASMEDIAROOT_Hub&amp;VID1B21&amp;PID1242</li>
			<li role="option">USB\ASMEDIAROOT_Hub</li>
		</ul>
		</div>
		<div class="dialog-buttons">
		<button class="default">OK</button>
		<button>Annuler</button>
		</div>
	</section>

	<!-- MSI reminder -->
	<aside class="reminder">
		<header>
		<svg class="dragon" viewBox="0 0 36 52"><path d="M18 0c6 3 11 4 17 6 2 22-4 37-17 46C5 43-1 28 1 6 7 4 12 3 18 0z" fill="#777"/><path d="M18 9c5 1 10 2 15 3 0 19-5 30-15 38C8 42 3 31 3 12c5-1 10-2 15-3z" fill="#d0121c"/><path d="M3 7c10-6 20-6 30 0v4C23 6 13 6 3 11z" fill="#333"/><path d="M15 4h6v4h-6z" fill="#ddd"/><path d="M7 20c2-5 7-8 12-7 4 1 8 2 9 5l-5-1c3 2 4 4 3 5l-5-2c-4-1-8 1-7 4 1 4 13 5 13 12 0 6-6 9-11 8-4-1-6-4-6-7 3 3 8 4 10 1 1-4-6-5-9-8-3-2-3-5-2-8z" fill="#f0dede"/><path d="M8 27l5 5M7 32l6 4M26 28l3-3" stroke="#f0dede"/></svg>
		<strong>msi</strong>
		<button aria-label="Accueil"><svg viewBox="0 0 24 24"><path d="M12 2l11 11h-4v9h-4v-6c0-3-6-3-6 0v6H5v-9H1z" fill="#a6a6a6"/></svg></button>
		<button aria-label="Fermer"><svg viewBox="0 0 24 24"><path d="M3 3l18 18M21 3L3 21" stroke="#aaa" stroke-width="2"/></svg></button>
		</header>
		<div class="reminder-body">
		<svg class="disc" viewBox="0 0 60 48"><circle cx="36" cy="23" r="23" fill="#bdbdbd"/><path d="M39 13l3-9 8 4-7 8z" fill="#222"/><circle cx="36" cy="23" r="8" fill="none" stroke="#222" stroke-width="3"/><circle cx="36" cy="23" r="2" fill="#222"/><circle cx="14" cy="30" r="13.500" fill="#d80f22" stroke="#700"/><path d="M18 24a8 8 0 1 1-8 0M8 21l6 1-3 6" fill="none" stroke="#111" stroke-width="3"/></svg>
		<div class="reminder-text">
			<p>Sauvegardez votre système avec MSI <em>BurnRecovery</em>.</p>
			<label><input type="checkbox" checked><span>Sauvegarde déjà terminée, ne plus me le rappeler.</span></label>
			<button>Sauvegarder maintenant</button>
		</div>
		</div>
	</aside>
	</div>

	<!-- Taskbar -->
	<footer class="taskbar">
	<button class="start" aria-label="Démarrer"><svg viewBox="0 0 20 20"><path d="M0 3l8-1v7H0zM9 2l11-2v9H9zM0 10h8v8l-8-1zM9 10h11v10L9 18z" fill="#000"/></svg></button>
	<label class="search"><svg viewBox="0 0 20 20"><circle cx="13" cy="7" r="6" fill="none" stroke="#222" stroke-width="1.400"/><path d="M9 11l-8 8" stroke="#222" stroke-width="1.400"/></svg><input type="text" placeholder="Taper ici pour rechercher" aria-label="Taper ici pour rechercher"></label>
	<button class="app" aria-label="Cortana"><svg viewBox="0 0 30 30"><circle cx="15" cy="15" r="8.500" fill="none" stroke="#000" stroke-width="2.500"/></svg></button>
	<button class="app" aria-label="Vue des tâches"><svg viewBox="0 0 30 30"><path d="M5 5v4h12V5M5 25v-4h12v4M6 11h10v8H6zM5 9v12M17 9v12M22 5v6M22 17v8M21 12h3v3h-3z" fill="none" stroke="#111" stroke-width="1.300"/></svg></button>
	<button class="app open" aria-label="Edge"><svg viewBox="0 0 30 30"><path d="M2 14C4 4 10 1 16 1c9 0 12 7 12 15H11c0 8 9 9 15 5v6C16 32 4 29 5 18c0-5 4-8 7-9-4 0-8 2-10 5zm9-2h10c0-7-9-7-10 0z" fill="#0a78d4"/></svg></button>
	<button class="app" aria-label="Explorateur"><svg viewBox="0 0 30 30"><path d="M2 3h11l2 3H2z" fill="#e5a50d"/><path d="M2 6h26v20H2z" fill="#fbdc68"/><path d="M7 26V15h17v11h-4v-7h-9v7z" fill="#3f9bdd"/></svg></button>
	<button class="app" aria-label="Store"><svg viewBox="0 0 30 30"><path d="M1 7h28v22H1z" fill="#000"/><path d="M10 8V5c0-5 10-5 10 0v3" fill="none" stroke="#111" stroke-width="2"/><path d="M8 12h6v6H8z" fill="#f25022"/><path d="M15 12h6v6h-6z" fill="#7fba00"/><path d="M8 19h6v6H8z" fill="#00a4ef"/><path d="M15 19h6v6h-6z" fill="#ffb900"/></svg></button>
	<button class="app" aria-label="Driver Booster"><svg viewBox="0 0 60 60"><use href="#i-boost" width="60" height="60"/></svg></button>
	<button class="app" aria-label="Courrier"><svg viewBox="0 0 30 30"><path d="M0 10L15 2l15 8v16H0z" fill="#3d3d3d"/><path d="M2 11h26L16 16l4 5z" fill="#ddd6d6"/></svg></button>
	<button class="app open" aria-label="Gestionnaire de périphériques"><svg viewBox="0 0 30 30"><path d="M11 5l6-3 10 1v19l-9 4-7-4z" fill="#c4c6c8"/><path d="M20 5l7-2v19l-7 3z" fill="#a2a5a8"/><path d="M11 5h9v11h-9z" fill="#303436"/><circle cx="14" cy="10" r="1.500" fill="#2cc53b"/><path d="M2 17l3-2h12l2 2v9l-4 2-13-3z" fill="#c9cbcd"/><path d="M4 19h3v4H4zM11 19h3v4h-3z" fill="#333"/></svg></button>
	<div class="tray">
		<svg viewBox="0 0 20 20"><path d="M2 14l8-8 8 8" fill="none" stroke="#222" stroke-width="1.500"/></svg>
		<svg viewBox="0 0 20 20"><path d="M6 8h10v7H6z" fill="#000"/><path d="M4 16.500h13.500v-10H7M18 9h2v5h-2M1 4v3h4V4M3 7v9M2 4V2M4 4V2" fill="none" stroke="#000" stroke-width="1.300"/></svg>
		<svg viewBox="0 0 20 20"><path d="M5 4h14v10H3V9M8 18h8M12 14v4M1 3h4v4H1zM3 7v3" fill="none" stroke="#000" stroke-width="1.200"/></svg>
		<svg viewBox="0 0 20 20"><path d="M1 7h3l4-4v14l-4-4H1zM11 7c2 2 2 4 0 6M13 5c3 3 3 7 0 10M15 3c4 4 4 10 0 14" fill="none" stroke="#222" stroke-width="1.300"/></svg>
	</div>
	<div class="clock"><span>19:12</span><span>08/06/2020</span></div>
	<button class="notif" aria-label="Notifications"><svg viewBox="0 0 20 20"><path d="M0 1h20v15h-3v4l-5-4H0z" fill="#000"/><path d="M4 5h12M4 8h12M4 11h8" stroke="#ddd" stroke-width="1.300"/></svg><span class="badge">4</span></button>
	</footer>

</body>

</html>
```
FILE: styles.css
```css
*
{
	box-sizing: border-box;
}

body
{
	margin: 0;
	height: 100vh;
	display: flex;
	flex-direction: column;
	overflow: hidden;
	background-color: #070606;
	font-family: "Open Sans", "Noto Sans", sans-serif;
	font-size: 14px;
	color: #1a1a1a;
}

button
{
	display: flex;
	align-items: center;
	justify-content: center;
	padding: 0;
	border: none;
	background: none;
	font: inherit;
	color: inherit;
}

h1,
h2,
p,
ul,
ol
{
	margin: 0;
	padding: 0;
	font-weight: 400;
	list-style: none;
}

svg
{
	display: block;
	flex: none;
}

.sprite
{
	position: absolute;
	width: 0;
	height: 0;
}

/* DESKTOP */

.desktop
{
	position: relative;
	flex: 1;
	min-height: 0;
	overflow: hidden;
}

.wallpaper
{
	position: absolute;
	top: 0;
	left: 0;
	width: 100%;
	height: 100vh;
}

.shortcuts
{
	position: relative;
	display: flex;
	flex-flow: column wrap;
	align-content: flex-start;
	height: 100%;
}

.shortcut
{
	display: flex;
	flex-direction: column;
	align-items: center;
	gap: 3px;
	width: 120px;
	height: 123px;
	padding-top: 8px;
}

.shortcut-icon
{
	width: 60px;
	height: 60px;
}

.shortcut-label
{
	color: white;
	line-height: 20px;
	text-align: center;
	white-space: nowrap;
	text-shadow: 1px 1px 2px #000;
}

.box-text
{
	font: 700 16px "Open Sans", sans-serif;
	fill: white;
}

/* WINDOWS */

.window
{
	position: absolute;
	display: flex;
	flex-direction: column;
}

.controls
{
	display: flex;
	margin-left: auto;
}

.controls button
{
	width: 58px;
}

.controls svg,
.tab-close,
.dialog-title svg
{
	width: 16px;
	height: 16px;
}

/* BROWSER */

.browser
{
	top: 52px;
	left: 100px;
	width: 1715px;
	height: 920px;
	background-color: white;
}

.tabstrip
{
	display: flex;
	height: 40px;
	padding-left: 889px;
	background-color: #cbcbcb;
}

.tab
{
	width: 101px;
	gap: 12px;
	padding-left: 10px;
	justify-content: flex-start;
	overflow: hidden;
	border-right: 1px solid #a8a8a8;
	font-size: 15px;
	white-space: nowrap;
}

.tab-first
{
	width: 105px;
	padding-right: 9px;
	justify-content: flex-end;
}

.tab.active
{
	width: 104px;
	padding-left: 9px;
	gap: 10px;
	background-color: #f2f2f2;
}

.tab-icon
{
	width: 20px;
	height: 20px;
}

.tab-fav
{
	width: 25px;
	height: 25px;
}

.tab-cut
{
	width: 20px;
	overflow: hidden;
}

.strip-btn
{
	width: 40px;
}

.strip-btn svg
{
	width: 18px;
	height: 18px;
}

.navbar
{
	display: flex;
	align-items: center;
	height: 51px;
	background-color: #f2f2f2;
	border-bottom: 1px solid #ccc;
}

.address
{
	display: flex;
	flex: 1;
	align-items: center;
	gap: 20px;
	height: 40px;
	margin-left: 200px;
	padding-right: 15px;
	border: 1px solid #c4c4c4;
	background-color: white;
}

.url
{
	flex: 1;
	padding: 0 0 0 768px;
	border: none;
	background: none;
	font: 15px "Open Sans", sans-serif;
	color: #777;
}

.nav-icon,
.nav-tools svg
{
	width: 20px;
	height: 20px;
}

.nav-tools
{
	display: flex;
	padding-left: 20px;
}

.nav-tools button
{
	width: 50px;
}

.viewport
{
	display: flex;
	flex: 1;
	min-height: 0;
}

.page
{
	flex: 1;
	overflow: hidden;
}

.page-header
{
	height: 103px;
	padding-top: 34px;
	border-radius: 0 0 4px 4px;
	background: linear-gradient(#000 10%, #515151);
}

.search-btn
{
	width: 1040px;
	height: 34px;
	padding-right: 32px;
	justify-content: flex-end;
	border-top: 1px solid #555;
	background: linear-gradient(#333, #555);
	color: white;
	font-size: 17px;
}

.page-body
{
	display: flex;
}

.steps
{
	display: flex;
	flex-direction: column;
	gap: 18px;
	width: 629px;
	padding: 517px 122px 0 227px;
	color: #111;
	font-size: 20px;
	line-height: 24px;
}

.steps li
{
	display: flex;
	gap: 24px;
	font-weight: 700;
}

.steps li:first-child
{
	margin-bottom: 27px;
}

.steps svg
{
	width: 44px;
	height: 44px;
	margin: -4px 0 -20px;
}

.results
{
	flex: 1;
	margin-top: 30px;
	padding-right: 185px;
	border-top: 1px solid #ccc;
}

.driver h2
{
	color: #c70b0b;
	font: 700 20px/28px "Open Sans", sans-serif;
	white-space: nowrap;
}

.first,
.second
{
	border-bottom: 3px dotted #bbb;
}

.first h2,
.second h2
{
	padding-left: 343px;
}

.first
{
	height: 250px;
	padding-top: 51px;
}

.second
{
	height: 377px;
	padding-top: 111px;
	border-bottom-color: #f2c8c8;
}

.third
{
	display: flex;
	align-items: center;
	gap: 13px;
	padding: 20px 0 0 15px;
}

.chip
{
	width: 44px;
	height: 50px;
}

.os-list
{
	display: flex;
	gap: 8px;
	padding-top: 77px;
}

.os
{
	width: 73px;
	height: 36px;
	border: 1px solid #b9bfd8;
	border-radius: 2px;
}

.os.selected
{
	border-color: #066799;
	background-color: #066799;
}

.file
{
	display: flex;
	gap: 11px;
	padding: 24px 0 0 11px;
}

.file-icon
{
	width: 48px;
	height: 60px;
	margin-top: 6px;
}

.file-info
{
	display: flex;
	flex: 1;
	flex-direction: column;
	line-height: 22px;
}

.file-info a
{
	color: #17688f;
}

.download
{
	display: flex;
	align-items: center;
	width: 184px;
	height: 43px;
	margin-top: 13px;
	border-radius: 3px;
	background-color: #5cb85c;
	color: white;
	font-size: 16px;
}

.download-text
{
	width: 119px;
	line-height: 40px;
	border-right: 1px solid white;
	text-align: center;
}

.download svg
{
	width: 20px;
	height: 20px;
	margin-left: 12px;
}

.scrollbar
{
	display: flex;
	flex-direction: column;
	align-items: center;
	width: 20px;
	padding-top: 4px;
	background-color: #e6e6e6;
}

.scrollbar svg
{
	width: 12px;
	height: 12px;
}

.thumb
{
	width: 100%;
	height: 270px;
	margin-top: 44px;
	background-color: #b8b8b8;
}

/* DEVICE MANAGER */

.manager
{
	top: 52px;
	left: 99px;
	width: 975px;
	height: 715px;
	border: 1px solid #8c8c8c;
	background-color: white;
	box-shadow: 2px 4px 14px rgba(0, 0, 0, 0.4);
}

.icon
{
	width: 20px;
	height: 20px;
}

.titlebar
{
	display: flex;
	align-items: center;
	gap: 6px;
	height: 40px;
	padding: 0 2px 0 8px;
	border-bottom: 1px solid #e6e6e6;
	color: #999;
}

.titlebar h1
{
	font-size: 14px;
}

.menu
{
	display: flex;
	gap: 20px;
	height: 28px;
	padding-left: 11px;
	border-bottom: 1px solid #c3c3c3;
}

.toolbar
{
	display: flex;
	align-items: center;
	height: 36px;
	border-bottom: 7px solid #f0f0f0;
}

.toolbar button
{
	width: 29px;
}

.toolbar svg
{
	width: 20px;
	height: 20px;
}

.sep
{
	width: 1px;
	height: 25px;
	margin: 0 5px 0 3px;
	background-color: #b5b5b5;
}

.tree
{
	flex: 1;
	padding: 1px 2px;
	border-top: 2px solid #828282;
	border-left: 2px solid #828282;
}

.tree li
{
	display: flex;
	align-items: center;
	height: 22px;
	padding-left: 24px;
	white-space: nowrap;
}

.tree li:nth-child(even)
{
	height: 23px;
}

.tree .root
{
	padding-left: 0;
}

.tree .leaf
{
	padding-left: 70px;
}

.tree .icon
{
	margin: 0 6px 0 2px;
}

.chev
{
	width: 12px;
	height: 12px;
	margin: 0 6px 0 5px;
}

.status
{
	display: flex;
	height: 31px;
	border-top: 1px solid #dcdcdc;
	background-color: #f0f0f0;
}

.status span
{
	width: 165px;
	border-right: 1px solid #dcdcdc;
}

.status span:first-child
{
	flex: 1;
}

.status span:last-child
{
	width: 110px;
	border: none;
}

/* PROPERTIES DIALOG */

.dialog
{
	top: 151px;
	left: 1122px;
	width: 500px;
	height: 569px;
	padding: 0 8px;
	border: 1px solid #5f5f5f;
	background-color: #f0f0f0;
	box-shadow: 3px 5px 18px rgba(0, 0, 0, 0.4);
	font: 13px/16px "Liberation Sans", Arial, sans-serif;
}

.dialog-title
{
	display: flex;
	align-items: center;
	justify-content: space-between;
	height: 38px;
	margin: 0 -8px;
	padding: 0 13px 0 10px;
	background-color: white;
}

.dialog-title h1
{
	font: 14px "Open Sans", sans-serif;
}

.dialog-tabs
{
	display: flex;
	align-items: flex-end;
	height: 34px;
	padding-left: 2px;
}

.dialog-tabs button
{
	height: 23px;
	padding: 0 6px 0 7px;
	border: 1px solid #e2e2e2;
	border-bottom: none;
}

.dialog-tabs .active
{
	height: 25px;
	padding: 0 9px 2px;
	border-color: white;
	background-color: white;
}

.panel
{
	display: flex;
	flex: 1;
	flex-direction: column;
	padding: 15px 16px 19px 17px;
	border: 1px solid #e4e4e4;
	background-color: white;
}

.device
{
	display: flex;
	gap: 17px;
	margin: 0 0 20px 6px;
}

.device svg
{
	width: 34px;
	height: 38px;
}

.device span
{
	padding-top: 6px;
}

.select-wrap
{
	position: relative;
	margin: 6px -2px 17px 0;
}

.select-wrap select
{
	display: block;
	width: 100%;
	height: 27px;
	padding: 0 5px;
	border: 1px solid #b3b3b3;
	border-radius: 0;
	background-color: #e1e1e1;
	appearance: none;
	font: inherit;
	color: inherit;
}

.select-wrap svg
{
	position: absolute;
	top: 7px;
	right: 5px;
	width: 12px;
	height: 12px;
}

.values
{
	flex: 1;
	margin-top: 6px;
	padding: 2px 3px;
	border: 1px solid #828790;
}

.values li
{
	height: 21px;
	padding: 1px 6px;
	border: 1px solid transparent;
}

.values .selected
{
	border-color: #5d7c99;
	background-color: #cce8ff;
}

.dialog-buttons
{
	display: flex;
	justify-content: flex-end;
	gap: 9px;
	padding: 9px 1px 8px 0;
}

.dialog-buttons button
{
	width: 92px;
	height: 28px;
	border: 1px solid #b5b5b5;
	background-color: #e1e1e1;
}

.dialog-buttons .default
{
	border: 2px solid #2b83d0;
}

/* MSI REMINDER */

.reminder
{
	position: absolute;
	right: 35px;
	bottom: 0;
	width: 320px;
	height: 256px;
	border: 1px solid #555;
	border-bottom: none;
	border-radius: 10px 10px 0 0;
	background: radial-gradient(circle at 50% 40%, #2e2e2e, #0a0a0a 75%);
	box-shadow: 0 0 4px rgba(0, 0, 0, 0.4);
	color: white;
}

.reminder header
{
	display: flex;
	align-items: center;
	gap: 10px;
	height: 59px;
	padding: 0 13px 0 17px;
	border-radius: 10px 10px 0 0;
	background-color: black;
}

.dragon
{
	width: 36px;
	height: 52px;
}

.reminder strong
{
	margin-right: auto;
	margin-left: -5px;
	padding-bottom: 8px;
	font-size: 48px;
	font-style: italic;
	font-weight: 800;
	line-height: 51px;
}

.reminder header button svg
{
	width: 24px;
	height: 24px;
}

.reminder-body
{
	display: flex;
	gap: 9px;
	padding: 21px 0 0 20px;
}

.disc
{
	width: 60px;
	height: 48px;
}

.reminder-text
{
	display: flex;
	flex-direction: column;
	align-items: flex-start;
	width: 205px;
}

.reminder-text p
{
	font-size: 15px;
	line-height: 22px;
}

.reminder-text em
{
	color: #c0141f;
	font-style: normal;
}

.reminder-text label
{
	display: flex;
	gap: 5px;
	margin: 22px 0;
	color: #bbb;
	font-size: 12px;
	line-height: 17px;
}

.reminder-text input
{
	position: relative;
	flex: none;
	width: 15px;
	height: 15px;
	margin: 1px 0 0;
	background-color: #ddd;
	appearance: none;
}

.reminder-text input::after
{
	content: "";
	position: absolute;
	top: 2px;
	left: 5px;
	width: 5px;
	height: 9px;
	border: solid #b5b5b5;
	border-width: 0 2px 2px 0;
	transform: rotate(40deg);
}

.reminder-text button
{
	width: 176px;
	height: 30px;
	border-radius: 4px;
	background: linear-gradient(#7c0713, #97091a);
	font-size: 15px;
	white-space: nowrap;
}

/* TASKBAR */

.taskbar
{
	position: relative;
	display: flex;
	height: 50px;
	padding-right: 4px;
	background: linear-gradient(90deg, #d9d5d5, #e0d3d3 30%, #dad6d6 60%, #d6d5d4);
}

.start
{
	width: 61px;
}

.start svg
{
	width: 20px;
	height: 20px;
}

.search
{
	display: flex;
	align-items: center;
	gap: 14px;
	width: 428px;
	padding-left: 14px;
	border: 1px solid #ccc;
	background-color: white;
}

.search svg
{
	width: 20px;
	height: 20px;
}

.search input
{
	flex: 1;
	padding: 0;
	border: none;
	outline: none;
	font: 18px "Open Sans", sans-serif;
}

.search input::placeholder
{
	color: #444;
}

.app
{
	width: 62px;
	border-bottom: 3px solid transparent;
}

.app.open
{
	margin: 0 6px;
	width: 50px;
	border-bottom-color: #0a78d4;
}

.app svg
{
	width: 28px;
	height: 28px;
}

.tray
{
	display: flex;
	align-items: center;
	gap: 10px;
	margin-left: auto;
}

.tray svg
{
	width: 20px;
	height: 20px;
}

.clock
{
	display: flex;
	flex-direction: column;
	align-items: center;
	justify-content: center;
	width: 103px;
	line-height: 22px;
}

.notif
{
	position: relative;
	width: 56px;
	border-right: 1px solid #aaa;
}

.notif svg
{
	width: 20px;
	height: 20px;
	margin-right: 18px;
}

.badge
{
	position: absolute;
	right: 16px;
	bottom: 5px;
	width: 21px;
	height: 21px;
	border: 1px solid #888;
	border-radius: 50%;
	background-color: #d6d5d4;
	line-height: 19px;
}
```
